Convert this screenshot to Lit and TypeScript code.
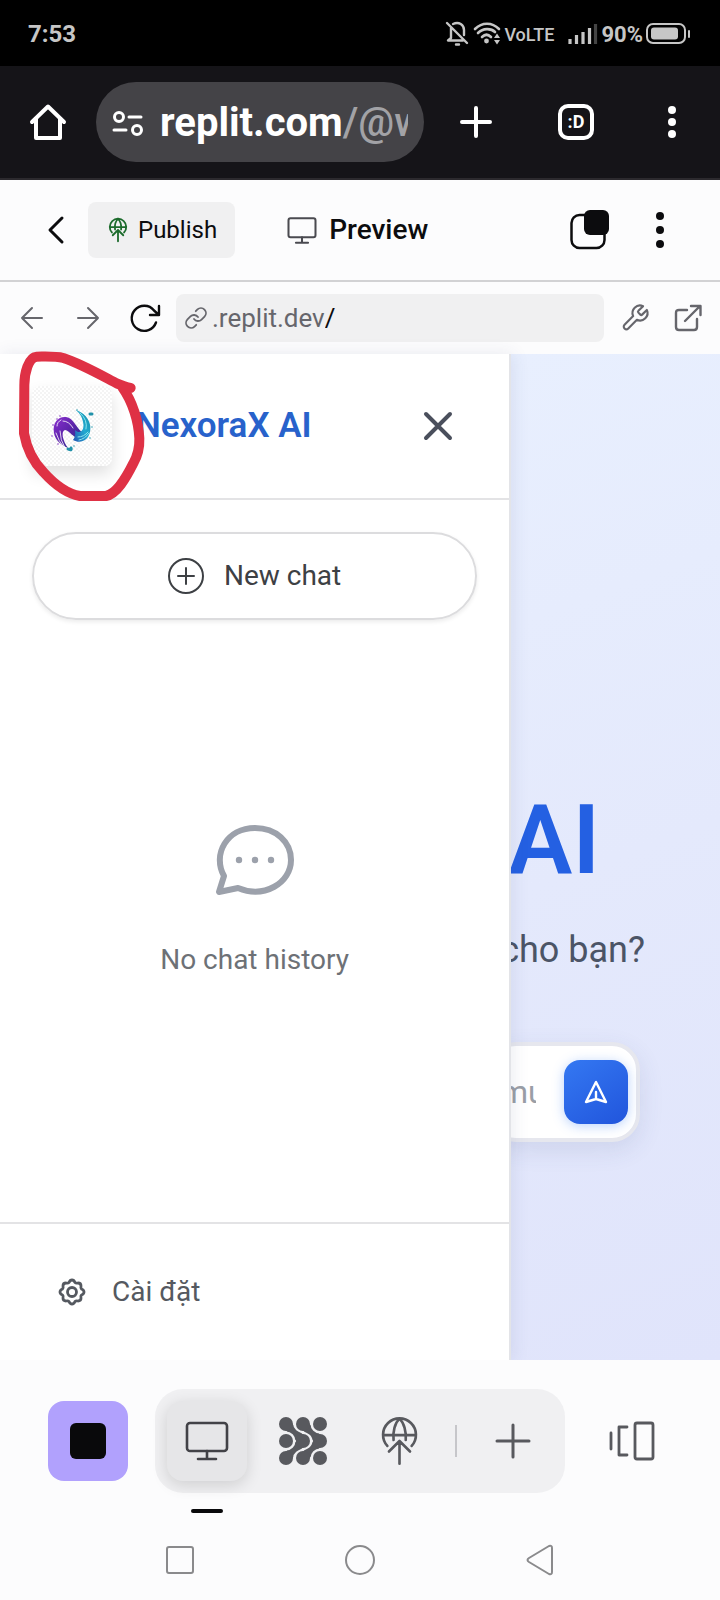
import { LitElement, html, svg, css } from "lit";
import { customElement } from "lit/decorators.js";

const globeUp = svg`
  <path d="M22 88A50 50 0 1 1 96 88M9 55H109M59 5C45 18 38 45 41 70M59 5C73 18 80 45 78 70M59 142V74M27 105L59 73L91 105"/>`;

const monitor = svg`
  <rect x="2" y="2" width="40" height="28" rx="3"/>
  <path d="M22 30V38M13 38H31"/>`;

@customElement("app-root")
export class AppRoot extends LitElement {
  static styles = css`
    :host {
      display: flex;
      flex-direction: column;
      min-height: 100vh;
      background: #fcfcfd;
      color: #0c0c0e;
      font-family: Roboto, "Noto Sans", sans-serif;
    }
    * { box-sizing: border-box; }
    button, input {
      font: inherit;
      color: inherit;
      border: 0;
      background: none;
      padding: 0;
      margin: 0;
    }
    button, a {
      display: flex;
      align-items: center;
      justify-content: center;
      flex: none;
      color: inherit;
    }
    svg {
      display: block;
      flex: none;
      fill: none;
      stroke: currentColor;
      stroke-linecap: round;
      stroke-linejoin: round;
      overflow: visible;
    }
    .solid { fill: currentColor; stroke: none; }

    .status {
      display: flex;
      justify-content: space-between;
      align-items: center;
      height: 66px;
      padding: 2px 30px 0 28px;
      background: #000;
      color: #c6c6c6;
      font-size: 24px;
      font-weight: 700;
    }
    .status-side { display: flex; align-items: center; gap: 14px; }
    .status-group { display: flex; align-items: center; gap: 3px; }
    .volte { font-size: 18px; font-weight: 500; }
    .percent { font-size: 22px; }

    .browser {
      display: flex;
      align-items: center;
      height: 114px;
      padding: 0 32px 0 30px;
      background: #151418;
      border-bottom: 2px solid #2c2a2e;
      color: #fff;
    }
    .address {
      flex: 1;
      min-width: 0;
      height: 80px;
      margin: 0 32px 0 30px;
      padding: 2px 16px 0;
      gap: 18px;
      border-radius: 40px;
      background: #444347;
      justify-content: flex-start;
    }
    .address-text {
      flex: 1;
      min-width: 0;
      overflow: hidden;
      white-space: nowrap;
      text-align: left;
      font-size: 40px;
      line-height: 56px;
      font-weight: 700;
    }
    .address-path { font-weight: 500; color: #a2a2a6; }
    .browser-actions { display: flex; align-items: center; gap: 62px; }
    .tabs {
      width: 36px;
      height: 36px;
      border: 4px solid #fff;
      border-radius: 10px;
      font-size: 18px;
      line-height: 20px;
      font-weight: 700;
    }

    .workspace {
      display: flex;
      align-items: center;
      height: 102px;
      padding: 0 44px 0 48px;
      border-bottom: 2px solid #d2d2d4;
    }
    .workspace .publish {
      height: 56px;
      margin-left: 24px;
      padding: 0 18px 0 20px;
      gap: 10px;
      border-radius: 8px;
      background: #f0f0f1;
      font-size: 24px;
    }
    .publish svg { color: #1c6b2c; }
    .current {
      display: flex;
      align-items: center;
      flex: 1;
      gap: 12px;
      margin: 0 0 0 52px;
      font-size: 28px;
      line-height: 36px;
      font-weight: 500;
    }
    .current svg { color: #4a4a50; }
    .workspace-end { display: flex; align-items: center; gap: 34px; }

    .location {
      display: flex;
      align-items: center;
      height: 72px;
      padding: 0 18px 0 20px;
      gap: 16px;
      color: #66666c;
    }
    .history { display: flex; align-items: center; gap: 32px; }
    .history .reload { color: #0c0c0e; }
    .path {
      display: flex;
      align-items: center;
      flex: 1;
      min-width: 0;
      height: 48px;
      padding: 0 8px;
      border-radius: 8px;
      background: #f0f0f1;
      font-size: 26px;
    }
    .path label { display: flex; align-items: center; gap: 4px; }
    .path input { flex: 1; min-width: 0; height: 40px; color: #0c0c0e; outline: none; }
    .location-end { display: flex; align-items: center; gap: 24px; }

    .stage { position: relative; z-index: 0; display: flex; flex: 1; min-height: 900px; }
    .mark {
      position: absolute;
      left: 0;
      top: -14px;
      z-index: 2;
      color: #df3145;
      pointer-events: none;
    }
    .drawer {
      display: flex;
      flex-direction: column;
      flex: none;
      width: 71%;
      background: #fff;
      border-right: 2px solid #e3e4e8;
      z-index: 1;
      box-shadow: 2px 0 16px rgba(60, 70, 120, 0.1);
    }
    .drawer-head {
      display: flex;
      align-items: center;
      height: 146px;
      padding: 0 56px 0 32px;
      border-bottom: 2px solid #e3e3e5;
    }
    .logo {
      width: 80px;
      height: 80px;
      border-radius: 8px;
      background: repeating-conic-gradient(#f4f4f4 0 25%, #fff 0 50%) 0 0 / 4px 4px;
      box-shadow: 0 8px 16px rgba(0, 0, 0, 0.12);
    }
    .brand {
      flex: 1;
      margin: 0 0 0 24px;
      font-size: 35px;
      line-height: 40px;
      font-weight: 600;
      color: #2862cb;
    }
    .close { color: #4a4f5c; }
    .drawer-body {
      display: flex;
      flex-direction: column;
      flex: 1;
      padding: 32px;
      font-size: 28px;
      line-height: 36px;
    }
    .new-chat {
      height: 88px;
      gap: 20px;
      border: 2px solid #dcdcde;
      border-radius: 44px;
      color: #3d4044;
      box-shadow: 0 2px 4px rgba(0, 0, 0, 0.08);
    }
    .empty {
      display: flex;
      flex-direction: column;
      align-items: center;
      gap: 46px;
      margin: 204px 0 0;
      color: #6d7176;
    }
    .empty svg { color: #9ca1ab; }
    .drawer-foot {
      height: 138px;
      padding: 0 56px;
      border-top: 2px solid #e3e3e5;
      display: flex;
      align-items: center;
      font-size: 28px;
      line-height: 36px;
      color: #555960;
    }
    .settings { gap: 24px; }

    .hero {
      display: flex;
      flex-direction: column;
      align-items: flex-end;
      flex: 1;
      min-width: 0;
      overflow: hidden;
      padding-top: 430px;
      background: linear-gradient(160deg, #e8effe, #e4e9fc 50%, #e0e4fb);
    }
    .hero-title {
      margin: 0;
      padding-right: 120px;
      font-size: 96px;
      line-height: 112px;
      font-weight: 600;
      color: #2460e2;
    }
    .hero-sub {
      margin: 34px 0 0;
      padding-right: 75px;
      font-size: 36px;
      line-height: 40px;
      white-space: nowrap;
      color: #4b5466;
    }
    .composer {
      display: flex;
      align-items: center;
      flex: none;
      gap: 28px;
      margin: 72px 80px 0 0;
      padding: 14px 8px;
      border: 4px solid #e6e7ee;
      border-radius: 28px;
      background: #fff;
      box-shadow: 0 8px 24px rgba(60, 70, 120, 0.12);
      font-size: 32px;
    }
    .composer input { width: 36px; height: 64px; outline: none; }
    .composer input::placeholder { color: #9a9ea6; opacity: 1; }
    .send {
      width: 64px;
      height: 64px;
      border-radius: 16px;
      color: #fff;
      background: linear-gradient(145deg, #3478f2, #2155dc);
      box-shadow: 0 2px 12px rgba(59, 130, 246, 0.35);
    }

    .bottom { position: relative; z-index: 0; background: #fcfcfd; }
    .dock {
      display: flex;
      align-items: center;
      justify-content: space-between;
      padding: 29px 48px 27px;
      color: #58595e;
    }
    .dock button { width: 80px; height: 80px; border-radius: 16px; }
    .dock .stop { background: #b1a1fd; color: #09090b; }
    .tools {
      display: flex;
      align-items: center;
      gap: 16px;
      padding: 12px;
      border-radius: 28px;
      background: #f0f0f2;
    }
    .dock .active {
      position: relative;
      background: #e6e6e8;
      color: #424247;
      box-shadow: 0 4px 16px rgba(0, 0, 0, 0.14);
    }
    .active::after {
      content: "";
      position: absolute;
      left: 24px;
      right: 24px;
      bottom: -32px;
      height: 4px;
      border-radius: 2px;
      background: #09090b;
    }
    .groove { stroke: #f0f0f2; stroke-width: 7; }
    .rule { width: 2px; height: 32px; background: #c6c6ca; }
    .system { display: flex; height: 80px; padding: 0 90px; color: #8a8a8c; }
    .system button { flex: 1; }
  `;

  render() {
    return html`
      <div class="status">
        <span>7:53</span>
        <div class="status-side">
          <div class="status-group">
            <svg width="25" height="26" viewBox="0 0 25 26" stroke-width="2.400">
              <path d="M2 2L22 22M6 7V17L3 19.500H18M8 3C14 0 19 4 19 9V14M11 23.500H14"/>
            </svg>
            <svg width="28" height="24" viewBox="0 0 28 24" stroke-width="2.600">
              <path d="M2 7C9 0 19 0 26 7M5 11C10 6 18 6 22 10M9 15C12 12 15 12 18 15"/>
              <circle class="solid" cx="13.500" cy="19" r="2.400"/>
              <path class="solid" d="M21 16L24 11.500L27 16ZM21 18L24 22.500L27 18Z"/>
            </svg>
            <span class="volte">VoLTE</span>
          </div>
          <div class="status-group">
            <svg width="30" height="20" viewBox="0 0 30 20" stroke-width="3.200" style="stroke-linecap:butt">
              <path d="M2 20V15M8.500 20V11M15 20V8M21.500 20V4"/>
              <path d="M27.500 20V0" stroke="#444"/>
            </svg>
            <span class="percent">90%</span>
            <svg width="44" height="22" viewBox="0 0 44 22" stroke-width="2">
              <rect x="1" y="1" width="38" height="19" rx="6"/>
              <rect class="solid" x="5" y="4.500" width="27" height="12" rx="3"/>
              <path d="M43 8V14"/>
            </svg>
          </div>
        </div>
      </div>

      <header class="browser">
        <button aria-label="Home">
          <svg width="36" height="36" viewBox="0 0 36 36" stroke-width="4">
            <path d="M2 18L18 2.500L34 18M6 15V34H30V15"/>
          </svg>
        </button>
        <button class="address">
          <svg width="30" height="25" viewBox="0 0 30 25" stroke-width="3">
            <circle cx="7" cy="6" r="4.500"/><path d="M17 6H29M2 19H14"/><circle cx="25" cy="19" r="4.500"/>
          </svg>
          <span class="address-text">replit.com<span class="address-path">/@w</span></span>
        </button>
        <div class="browser-actions">
          <button aria-label="New tab">
            <svg width="40" height="36" viewBox="0 0 40 36" stroke-width="4"><path d="M6 18H34M20 4V32"/></svg>
          </button>
          <button class="tabs">:D</button>
          <button aria-label="Menu">
            <svg class="solid" width="32" height="32" viewBox="0 0 32 32">
              <circle cx="16" cy="4" r="4"/><circle cx="16" cy="16" r="4"/><circle cx="16" cy="28" r="4"/>
            </svg>
          </button>
        </div>
      </header>

      <div class="workspace">
        <button aria-label="Back">
          <svg width="16" height="28" viewBox="0 0 16 28" stroke-width="3"><path d="M14 2L2 14L14 26"/></svg>
        </button>
        <button class="publish">
          <svg width="20" height="24" viewBox="0 0 118 146" stroke-width="11">${globeUp}</svg>
          Publish
        </button>
        <h1 class="current">
          <svg width="30" height="27" viewBox="0 0 44 40" stroke-width="3">${monitor}</svg>
          Preview
        </h1>
        <div class="workspace-end">
          <button aria-label="Tabs">
            <svg width="40" height="40" viewBox="0 0 40 40" stroke-width="2.500">
              <rect x="1.500" y="5" width="33" height="33" rx="8"/>
              <rect class="solid" x="14" y="0" width="25" height="25" rx="6"/>
            </svg>
          </button>
          <button aria-label="More">
            <svg class="solid" width="32" height="36" viewBox="0 0 32 36">
              <circle cx="16" cy="4" r="4"/><circle cx="16" cy="18" r="4"/><circle cx="16" cy="32" r="4"/>
            </svg>
          </button>
        </div>
      </div>

      <nav class="location">
        <div class="history">
          <button aria-label="Previous page">
            <svg width="24" height="24" viewBox="0 0 24 24" stroke-width="2"><path d="M22 12H2M12 2L2 12L12 22"/></svg>
          </button>
          <button aria-label="Next page">
            <svg width="24" height="24" viewBox="0 0 24 24" stroke-width="2"><path d="M2 12H22M12 2L22 12L12 22"/></svg>
          </button>
          <button class="reload" aria-label="Reload">
            <svg width="28" height="28" viewBox="0 0 28 28" stroke-width="2.400">
              <path d="M24 18.500A12.500 12.500 0 1 1 22 6.500L27 11M27 2V11H18"/>
            </svg>
          </button>
        </div>
        <div class="path">
          <label for="path">
            <svg width="24" height="24" viewBox="0 0 24 24" stroke-width="1.800">
              <path d="M10 13a5 5 0 0 0 7.540.540l3-3a5 5 0 0 0-7.070-7.070l-1.720 1.710M14 11a5 5 0 0 0-7.540-.540l-3 3a5 5 0 0 0 7.070 7.070l1.710-1.710"/>
            </svg>
            .replit.dev
          </label>
          <input id="path" value="/" />
        </div>
        <div class="location-end">
          <button aria-label="Developer tools">
            <svg width="30" height="30" viewBox="0 0 24 24" stroke-width="1.700">
              <path d="M14.700 6.300a1 1 0 0 0 0 1.400l1.600 1.600a1 1 0 0 0 1.400 0l3.770-3.770a6 6 0 0 1-7.940 7.940l-6.910 6.910a2.120 2.120 0 0 1-3-3l6.910-6.910a6 6 0 0 1 7.940-7.940l-3.760 3.760z"/>
            </svg>
          </button>
          <a href="#" aria-label="Open in new tab">
            <svg width="28" height="28" viewBox="0 0 28 28" stroke-width="2.400">
              <path d="M13 6H5Q2 6 2 9V23Q2 26 5 26H20Q23 26 23 23V15M11 17L26 2M17 2H26.500V11"/>
            </svg>
          </a>
        </div>
      </nav>

      <section class="stage">
        <aside class="drawer">
          <div class="drawer-head">
            <svg class="logo" viewBox="0 0 80 80">
              <defs>
                <linearGradient id="violet" x1="0" y1="0" x2="1" y2="1">
                  <stop offset="0" stop-color="#8b2fd0"/><stop offset=".5" stop-color="#5a23a8"/><stop offset="1" stop-color="#183a86"/>
                </linearGradient>
                <linearGradient id="aqua" x1="0" y1="1" x2="1" y2="0">
                  <stop offset="0" stop-color="#2456b4"/><stop offset=".5" stop-color="#22a9d0"/><stop offset="1" stop-color="#188fa8"/>
                </linearGradient>
              </defs>
              <path class="solid" style="fill:url(#violet)" d="M22 47C20 36 27 30 34 31C42 32 44 42 50 46L48 53C40 51 38 45 33 44C29 45 30 54 36 62C27 58 23 53 22 47Z"/>
              <path class="solid" style="fill:url(#aqua)" d="M43 44C48 49 53 44 51 36C50 30 47 27 44 24C55 28 60 37 58 46C56 55 48 58 41 54Q44 50 43 44Z"/>
              <path d="M24 47Q27 56 31 60M28 45Q28 54 33 62M31 35Q37 35 41 42M25 40Q25 36 29 34" stroke="#fff" stroke-width=".8"/>
              <path d="M48 27Q56 34 54 43M46 51Q52 51 56 46M47 54Q53 53 57 47" stroke="#8be6ee" stroke-width="1"/>
              <path d="M36 63Q40 65 39 62M58 28H60" stroke="#2192aa" stroke-width="3"/>
              <path d="M21 39H21M25 33H25M20 50H20M28 30H28M26 58H26" stroke="#8130c0" stroke-width="1.500"/>
              <path d="M45 24H45M58 52H58M60 41H60M42 60H42" stroke="#279bb0" stroke-width="1.500"/>
            </svg>
            <h2 class="brand">NexoraX AI</h2>
            <button class="close" aria-label="Close">
              <svg width="30" height="30" viewBox="0 0 30 30" stroke-width="4"><path d="M3 3L27 27M27 3L3 27"/></svg>
            </button>
          </div>
          <div class="drawer-body">
            <button class="new-chat">
              <svg width="36" height="36" viewBox="0 0 36 36" stroke-width="2">
                <circle cx="18" cy="18" r="17"/><path d="M10 18H26M18 10V26"/>
              </svg>
              New chat
            </button>
            <p class="empty">
              <svg width="80" height="72" viewBox="0 0 80 72" stroke-width="6">
                <path d="M9 52C-3 30 12 4 40 4C61 4 76 18 76 36C76 59 49 75 23 64L4 68Z"/>
                <g class="solid"><circle cx="24" cy="36" r="3.200"/><circle cx="40" cy="36" r="3.200"/><circle cx="56" cy="36" r="3.200"/></g>
              </svg>
              No chat history
            </p>
          </div>
          <div class="drawer-foot">
            <button class="settings">
              <svg width="32" height="32" viewBox="0 0 32 32" stroke-width="2.800">
                <path d="M16 4Q18 4 19 6.500Q20 7.500 22 7Q25 7 25 10Q24.500 12 25.500 13Q28 14 28 16Q28 18 25.500 19Q24.500 20 25 22Q25 25 22 25Q20 24.500 19 25.500Q18 28 16 28Q14 28 13 25.500Q12 24.500 10 25Q7 25 7 22Q7.500 20 6.500 19Q4 18 4 16Q4 14 6.500 13Q7.500 12 7 10Q7 7 10 7Q12 7.500 13 6.500Q14 4 16 4Z"/>
                <circle cx="16" cy="16" r="4.500"/>
              </svg>
              Cài đặt
            </button>
          </div>
        </aside>

        <main class="hero">
          <h2 class="hero-title">AI</h2>
          <p class="hero-sub">cho bạn?</p>
          <form class="composer" @submit=${(e: Event) => e.preventDefault()}>
            <input placeholder="mu" aria-label="Message" />
            <button class="send" aria-label="Send">
              <svg width="24" height="24" viewBox="0 0 24 24" stroke-width="2.400">
                <path d="M12 2L2 22L12 19L22 22ZM12 19V12"/>
              </svg>
            </button>
          </form>
        </main>

        <svg class="mark" width="160" height="170" viewBox="0 0 480 510" stroke-width="30">
          <path d="M392 144C380 142 366 137 350 130C315 112 245 72 190 54C165 48 135 50 110 50C85 52 73 100 73 135L72 280C80 325 100 365 130 396C165 435 205 462 240 468H318C350 462 378 414 400 370C414 345 419 322 418 295C416 245 398 185 367 142"/>
        </svg>
      </section>

      <footer class="bottom">
        <div class="dock">
          <button class="stop" aria-label="Stop">
            <svg class="solid" width="36" height="36" viewBox="0 0 36 36"><rect width="36" height="36" rx="6"/></svg>
          </button>
          <div class="tools">
            <button class="active" aria-label="Preview">
              <svg width="44" height="40" viewBox="0 0 44 40" stroke-width="2.600">${monitor}</svg>
            </button>
            <button aria-label="Agent">
              <svg width="48" height="48" viewBox="0 0 144 144" stroke-width="28">
                <path d="M21 21L72 72L21 123M72 21L123 72L72 123"/>
                <path class="groove" d="M46 -4V21C46 50 97 42 97 72C97 102 46 94 46 123V148"/>
                <circle class="groove" cx="21" cy="72" r="25"/>
                <circle class="groove" cx="123" cy="21" r="25"/>
                <circle class="groove" cx="123" cy="123" r="25"/>
                <g class="solid">
                  <circle cx="21" cy="21" r="21"/><circle cx="72" cy="21" r="21"/><circle cx="123" cy="21" r="21"/>
                  <circle cx="21" cy="72" r="21"/><circle cx="72" cy="72" r="21"/><circle cx="123" cy="72" r="21"/>
                  <circle cx="21" cy="123" r="21"/><circle cx="72" cy="123" r="21"/><circle cx="123" cy="123" r="21"/>
                </g>
              </svg>
            </button>
            <button aria-label="Publish">
              <svg width="39" height="48" viewBox="0 0 118 146" stroke-width="8">${globeUp}</svg>
            </button>
            <span class="rule"></span>
            <button aria-label="Add">
              <svg width="36" height="36" viewBox="0 0 36 36" stroke-width="3"><path d="M2 18H34M18 2V34"/></svg>
            </button>
          </div>
          <button aria-label="Switch panes">
            <svg width="46" height="40" viewBox="0 0 46 40" stroke-width="2.800">
              <path d="M2 12V28M18 6H10V34H18"/><rect x="26" y="2" width="18" height="36" rx="2"/>
            </svg>
          </button>
        </div>
        <div class="system">
          <button aria-label="Recents">
            <svg width="28" height="28" viewBox="0 0 28 28" stroke-width="2"><rect x="1" y="1" width="26" height="26" rx="2"/></svg>
          </button>
          <button aria-label="Home screen">
            <svg width="30" height="30" viewBox="0 0 30 30" stroke-width="2"><circle cx="15" cy="15" r="14"/></svg>
          </button>
          <button aria-label="Go back">
            <svg width="28" height="32" viewBox="0 0 28 32" stroke-width="2"><path d="M3 14L23 2Q26 1 26 4V28Q26 31 23 30L3 18Q0 16 3 14Z"/></svg>
          </button>
        </div>
      </footer>
    `;
  }
}
